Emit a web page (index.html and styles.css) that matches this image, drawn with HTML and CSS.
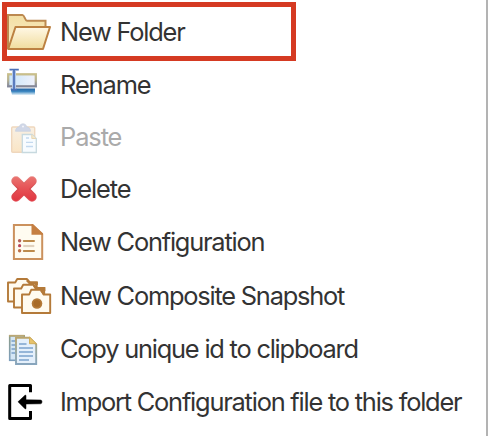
FILE: index.html
```html
<!DOCTYPE html>
<html lang="en">
<head>
<meta charset="utf-8">
<title>Folder menu</title>
<link rel="stylesheet" href="styles.css">
</head>
<body>
<svg class="defs" width="0" height="0" aria-hidden="true">
  <defs>
    <linearGradient id="folder" x1="0" y1="0" x2="0" y2="1"><stop offset="0" stop-color="#fff8e6"/><stop offset="1" stop-color="#f0dc9d"/></linearGradient>
    <linearGradient id="back" x1="0" y1="0" x2="0" y2="1"><stop offset="0" stop-color="#f3dfa4"/><stop offset="1" stop-color="#faedc9"/></linearGradient>
    <linearGradient id="field" x1="0" y1="0" x2="1" y2="0"><stop offset="0" stop-color="#c9e6fa"/><stop offset="1" stop-color="#f0f1fb"/></linearGradient>
    <linearGradient id="frame" x1="0" y1="0" x2="0" y2="1"><stop offset="0" stop-color="#c9bf8b"/><stop offset=".5" stop-color="#b5b194"/><stop offset="1" stop-color="#83879a"/></linearGradient>
    <linearGradient id="bar" x1="0" y1="0" x2="0" y2="1"><stop offset="0" stop-color="#2563a2"/><stop offset=".45" stop-color="#3b86c0"/><stop offset="1" stop-color="#e5f2f9"/></linearGradient>
    <linearGradient id="clip" x1="0" y1="0" x2="0" y2="1"><stop offset="0" stop-color="#f8f0e4"/><stop offset="1" stop-color="#fae5c5"/></linearGradient>
    <linearGradient id="red" gradientUnits="userSpaceOnUse" x1="0" y1="176" x2="0" y2="202"><stop offset="0" stop-color="#ea7672"/><stop offset=".5" stop-color="#e65155"/><stop offset="1" stop-color="#e0343f"/></linearGradient>
    <linearGradient id="redline" gradientUnits="userSpaceOnUse" x1="0" y1="176" x2="0" y2="202"><stop offset="0" stop-color="#eb8c86"/><stop offset=".5" stop-color="#cf3d42"/><stop offset="1" stop-color="#e5545b"/></linearGradient>
    <linearGradient id="sheet" x1="0" y1="0" x2="0" y2="1"><stop offset="0" stop-color="#8c9b88"/><stop offset="1" stop-color="#7d9fbd"/></linearGradient>
    <linearGradient id="sheettop" x1="0" y1="0" x2="0" y2="1"><stop offset="0" stop-color="#bba56c"/><stop offset=".4" stop-color="#9da899"/><stop offset="1" stop-color="#87a5bd"/></linearGradient>
  </defs>
</svg>
<ul class="menu">
  <li class="item h52 selected">
    <svg class="icon" viewBox="0 6 60 52">
      <path d="M8 49V15h14.500c2 0 2.500 5.800 4.500 5.800h18.500V27" fill="url(#back)" stroke="#bc8950" stroke-width="2"/>
      <path d="M15.500 27H50L43 49H8.200Z" fill="url(#folder)" stroke="#bc8142" stroke-width="2" stroke-linejoin="round"/>
    </svg>
    <span class="label">New Folder</span>
  </li>
  <li class="item h53">
    <svg class="icon" viewBox="0 58 60 53">
      <path d="M10.500 88.500h24.500v6.500H12Z" fill="url(#bar)"/>
      <rect x="8.200" y="74.300" width="27.600" height="12" fill="url(#field)" stroke="url(#frame)" stroke-width="2.300"/>
      <path d="M14 71V89" stroke="#b4caea" stroke-width="4"/>
      <path d="M14 70V89M9.500 69.700h9.300M11 89.700h6" fill="none" stroke="#4b70b8" stroke-width="1.700"/>
    </svg>
    <span class="label short">Rename</span>
  </li>
  <li class="item h52 disabled">
    <svg class="icon" viewBox="0 111 60 52">
      <rect x="11.700" y="127" width="23" height="25.300" rx="1" fill="url(#clip)" stroke="#efd7bd" stroke-width="1.400"/>
      <path d="M15.500 131.300c0-3 2-4.500 4-4.500 0-4 7-4 7 0 2 0 4 1.500 4 4.500Z" fill="#d0d7e7" stroke="#c9d1df" stroke-width=".7"/>
      <circle cx="23" cy="126.500" r="1" fill="#f4f5fa"/>
      <path d="M22.300 134.500H32l4.300 4v14h-14Z" fill="#f8fcff" stroke="#c7d9df" stroke-width="1.300"/>
      <path d="M31.800 134.500v4h4.400" fill="#f6e8c8" stroke="#e7d5b4"/>
      <path d="M26 138h3M26 142.300h7M26 146.500h7" stroke="#c4d9ef" stroke-width="1.300"/>
    </svg>
    <span class="label short">Paste</span>
  </li>
  <li class="item h52">
    <svg class="icon" viewBox="0 163 60 52">
      <path d="M16 181L32 197M32 181L16 197" stroke="url(#redline)" stroke-width="9.400" stroke-linecap="round"/>
      <path d="M16 181L32 197M32 181L16 197" stroke="url(#red)" stroke-width="7.400" stroke-linecap="round"/>
    </svg>
    <span class="label short">Delete</span>
  </li>
  <li class="item h54">
    <svg class="icon" viewBox="0 215 60 54">
      <path d="M13.900 225H32l10.200 9.300V259H13.900Z" fill="#fffcf1" stroke="#cb915d" stroke-width="2"/>
      <path d="M31.500 224h1.500l10 9.500v1.300H31.500Z" fill="#c57f42"/>
      <path d="M23.800 241H34M23.800 251H34" stroke="#bd8b4c" stroke-width="2" stroke-linecap="round"/>
      <path d="M23.300 246H34.300" stroke="#e0d2bf" stroke-width="2.200"/>
      <circle cx="19.600" cy="240.700" r="1.700" fill="#b4615a"/><circle cx="19.600" cy="245.700" r="1.600" fill="#b9445a"/><circle cx="19.600" cy="250.700" r="1.700" fill="#bd7048"/>
    </svg>
    <span class="label">New Configuration</span>
  </li>
  <li class="item h53">
    <svg class="icon" viewBox="0 269 60 53">
      <g fill="#fffbf0" stroke="#b47a39" stroke-width="1.900" stroke-linejoin="round">
        <path d="M8 301.500V282.500h7.200l2-3.500h9.800l2.200 3.500h7.500v19Z"/>
        <path d="M14 307.500V288.500h7.200l2-3.700h10.300l2.200 3.700h8.500v19Z"/>
        <path d="M22 313V294.500h7.200l2-4.700h10.300l2.200 4.700h6.500V313Z"/>
      </g>
      <path d="M27 280l3 3h6.500v2M34 285.500l3 3h7v2.500M41 290l3 4" fill="none" stroke="#b47a39" stroke-width="2.800"/>
      <circle cx="37" cy="303.500" r="5.300" fill="#b47a39"/>
      <circle cx="37" cy="303.500" r="3.500" fill="#a86b28"/>
    </svg>
    <span class="label">New Composite Snapshot</span>
  </li>
  <li class="item h53">
    <svg class="icon" viewBox="0 322 60 53">
      <rect x="9.700" y="335.800" width="14.500" height="24.500" fill="#d4e6f5" stroke="url(#sheet)" stroke-width="1.600"/>
      <path d="M9 335.700h15.500" stroke="#bba875" stroke-width="1.700"/>
      <path d="M11.500 341h4M11.500 345h4M11.500 349h4M11.500 353h4" stroke="#779fc7" stroke-width="1.700"/>
      <path d="M16 337.800h13.500l6.700 6.500V364H16Z" fill="#e5f0fb" stroke="url(#sheettop)" stroke-width="1.900"/>
      <path d="M29.500 337v6.700h7Z" fill="#e8c36b" stroke="#d1ae5b"/>
      <path d="M19 344h7.500M19 348h14M19 352h14M19 356h14M19 360h10" stroke="#7ca2cd" stroke-width="1.700"/>
    </svg>
    <span class="label">Copy unique id to clipboard</span>
  </li>
  <li class="item h53">
    <svg class="icon" viewBox="0 375 60 53">
      <path d="M30.500 392.300V385.500H9.700V418.400H30.500V411" fill="none" stroke="#000" stroke-width="3" stroke-linejoin="round"/>
      <path d="M18 401.800L25 395.200q1-.6 1 .8V399.800L40.500 400q1.500 0 1.500 1.800t-1.500 2L26 404v4q0 1.500-1 .8Z" stroke="#000" stroke-width=".5"/>
    </svg>
    <span class="label">Import Configuration file to this folder</span>
  </li>
</ul>
</body>
</html>
```
FILE: styles.css
```css
body {
  margin: 0;
  background: #fff;
  overflow: hidden;
}

.defs {
  position: absolute;
}

.menu {
  box-sizing: border-box;
  height: 436px;
  margin: 0;
  padding: 6px 0 0;
  width: 488px;
  border-right: 2px solid #b3b3b3;
  list-style: none;
  font: 25.4px/30px Inter, "Liberation Sans", sans-serif;
  color: #333;
}

.item {
  position: relative;
  display: flex;
  align-items: center;
}

.h52 { height: 52px; }
.h53 { height: 53px; }
.h54 { height: 54px; }

.icon {
  flex: none;
  width: 60px;
  height: 100%;
}

.label {
  white-space: nowrap;
  letter-spacing: -1.21px;
}

.label.short {
  letter-spacing: -1.08px;
}

.disabled .label {
  color: #aaa;
}

.selected::after {
  content: "";
  position: absolute;
  box-sizing: border-box;
  left: 2px;
  top: -4px;
  width: 294px;
  height: 59px;
  border: 5px solid #d53a22;
}
```
